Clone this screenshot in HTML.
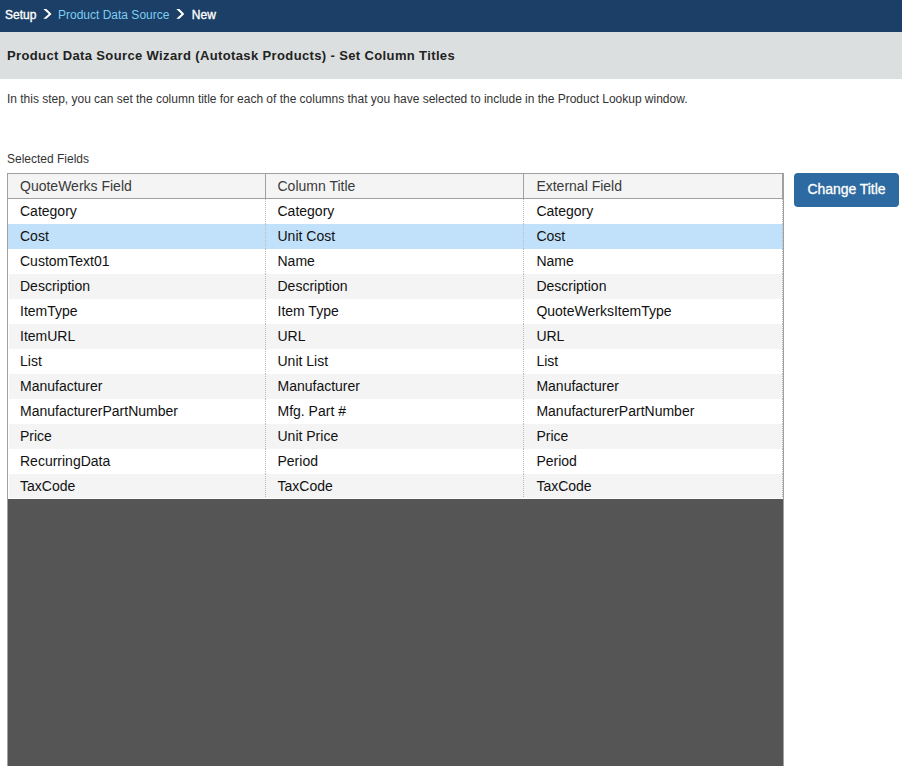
<!DOCTYPE html>
<html>
<head>
<meta charset="utf-8">
<style>
html,body{margin:0;padding:0;}
body{width:902px;height:766px;overflow:hidden;background:#fff;font-family:"Liberation Sans",sans-serif;position:relative;}
.topbar{position:absolute;left:0;top:0;width:902px;height:32px;background:#1b3f66;}
.topbar span{position:absolute;top:8px;font-size:12px;line-height:14px;white-space:nowrap;}
.crumb-w{color:#fff;-webkit-text-stroke:0.35px #fff;}
.crumb-l{color:#7ecdf3;}
.chev{position:absolute;top:9px;}
.titlebar{position:absolute;left:0;top:32px;width:902px;height:47px;background:#dcdfdf;}
.titlebar span{position:absolute;left:7px;top:16px;font-size:13px;line-height:15px;font-weight:bold;color:#222;letter-spacing:0.37px;white-space:nowrap;}
.intro{position:absolute;left:7px;top:92px;font-size:12px;letter-spacing:-0.015px;line-height:14px;color:#333;white-space:nowrap;}
.sel{position:absolute;left:7px;top:152px;font-size:12px;line-height:14px;color:#333;white-space:nowrap;}
.grid{position:absolute;left:7px;top:173px;width:775px;height:600px;border:1px solid #a0a0a0;background:#555;}
.hdr{position:absolute;left:0;top:0;width:775px;height:24px;background:#f4f4f4;border-bottom:1px solid #a0a0a0;}
.row{position:absolute;left:0;width:775px;height:25px;background:#fff;}
.row.last{height:24px;border-bottom:1px solid #fff;}
.row.last .vd{height:24px;}
.row.alt::before{content:"";position:absolute;left:0;top:0;width:1px;height:100%;background:#fff;}
.row.alt{background:#f4f4f4;}
.row.sel2{background:#c1e0fa;}
.c{position:absolute;top:0;height:25px;line-height:25px;font-size:14px;color:#111;white-space:nowrap;}
.hdr .c{height:24px;line-height:24px;color:#3a3a3a;}
.c1{left:12px;}
.c2{left:269.5px;}
.c3{left:528.4px;}
.vd{position:absolute;top:0;width:1px;height:25px;}
.hdr .vd{background:#a0a0a0;height:24px;}
.row .vd{background-image:linear-gradient(#bbb 50%,transparent 50%);background-size:1px 2px;}
.d1{left:257px;}
.d2{left:515px;}
.d3{left:774px;}
.btn{position:absolute;left:794px;top:173px;width:105px;height:34px;background:#2d6aa1;border-radius:4px;color:#fff;font-size:14px;line-height:32px;text-align:center;-webkit-text-stroke:0.3px #fff;letter-spacing:-0.05px;}
</style>
</head>
<body>
<div class="topbar">
  <span class="crumb-w" style="left:5px">Setup</span>
  <svg style="position:absolute;left:40px;top:6px" width="14" height="16" viewBox="0 0 14 16"><polygon points="3.3,3 6.4,3 11.6,7.9 6.4,12.7 3.3,12.7 8.8,7.9" fill="#fff"/></svg>
  <span class="crumb-l" style="left:58px">Product Data Source</span>
  <svg style="position:absolute;left:173.2px;top:6px" width="14" height="16" viewBox="0 0 14 16"><polygon points="3.3,3 6.4,3 11.3,7.9 6.4,12.7 3.3,12.7 8.5,7.9" fill="#fff"/></svg>
  <span class="crumb-w" style="left:191.8px">New</span>
</div>
<div class="titlebar"><span>Product Data Source Wizard (Autotask Products) - Set Column Titles</span></div>
<div class="intro">In this step, you can set the column title for each of the columns that you have selected to include in the Product Lookup window.</div>
<div class="sel">Selected Fields</div>
<div class="grid">
  <div class="hdr"><div class="c c1">QuoteWerks Field</div><div class="vd d1"></div><div class="c c2">Column Title</div><div class="vd d2"></div><div class="c c3">External Field</div><div class="vd d3"></div></div>
  <div class="row" style="top:25px"><div class="c c1">Category</div><div class="vd d1"></div><div class="c c2">Category</div><div class="vd d2"></div><div class="c c3">Category</div><div class="vd d3"></div></div>
  <div class="row sel2" style="top:50px"><div class="c c1">Cost</div><div class="vd d1"></div><div class="c c2">Unit Cost</div><div class="vd d2"></div><div class="c c3">Cost</div><div class="vd d3"></div></div>
  <div class="row" style="top:75px"><div class="c c1">CustomText01</div><div class="vd d1"></div><div class="c c2">Name</div><div class="vd d2"></div><div class="c c3">Name</div><div class="vd d3"></div></div>
  <div class="row alt" style="top:100px"><div class="c c1">Description</div><div class="vd d1"></div><div class="c c2">Description</div><div class="vd d2"></div><div class="c c3">Description</div><div class="vd d3"></div></div>
  <div class="row" style="top:125px"><div class="c c1">ItemType</div><div class="vd d1"></div><div class="c c2">Item Type</div><div class="vd d2"></div><div class="c c3">QuoteWerksItemType</div><div class="vd d3"></div></div>
  <div class="row alt" style="top:150px"><div class="c c1">ItemURL</div><div class="vd d1"></div><div class="c c2">URL</div><div class="vd d2"></div><div class="c c3">URL</div><div class="vd d3"></div></div>
  <div class="row" style="top:175px"><div class="c c1">List</div><div class="vd d1"></div><div class="c c2">Unit List</div><div class="vd d2"></div><div class="c c3">List</div><div class="vd d3"></div></div>
  <div class="row alt" style="top:200px"><div class="c c1">Manufacturer</div><div class="vd d1"></div><div class="c c2">Manufacturer</div><div class="vd d2"></div><div class="c c3">Manufacturer</div><div class="vd d3"></div></div>
  <div class="row" style="top:225px"><div class="c c1">ManufacturerPartNumber</div><div class="vd d1"></div><div class="c c2">Mfg. Part #</div><div class="vd d2"></div><div class="c c3">ManufacturerPartNumber</div><div class="vd d3"></div></div>
  <div class="row alt" style="top:250px"><div class="c c1">Price</div><div class="vd d1"></div><div class="c c2">Unit Price</div><div class="vd d2"></div><div class="c c3">Price</div><div class="vd d3"></div></div>
  <div class="row" style="top:275px"><div class="c c1">RecurringData</div><div class="vd d1"></div><div class="c c2">Period</div><div class="vd d2"></div><div class="c c3">Period</div><div class="vd d3"></div></div>
  <div class="row alt last" style="top:300px"><div class="c c1">TaxCode</div><div class="vd d1"></div><div class="c c2">TaxCode</div><div class="vd d2"></div><div class="c c3">TaxCode</div><div class="vd d3"></div></div>
</div>
<div class="btn">Change Title</div>
</body>
</html>
